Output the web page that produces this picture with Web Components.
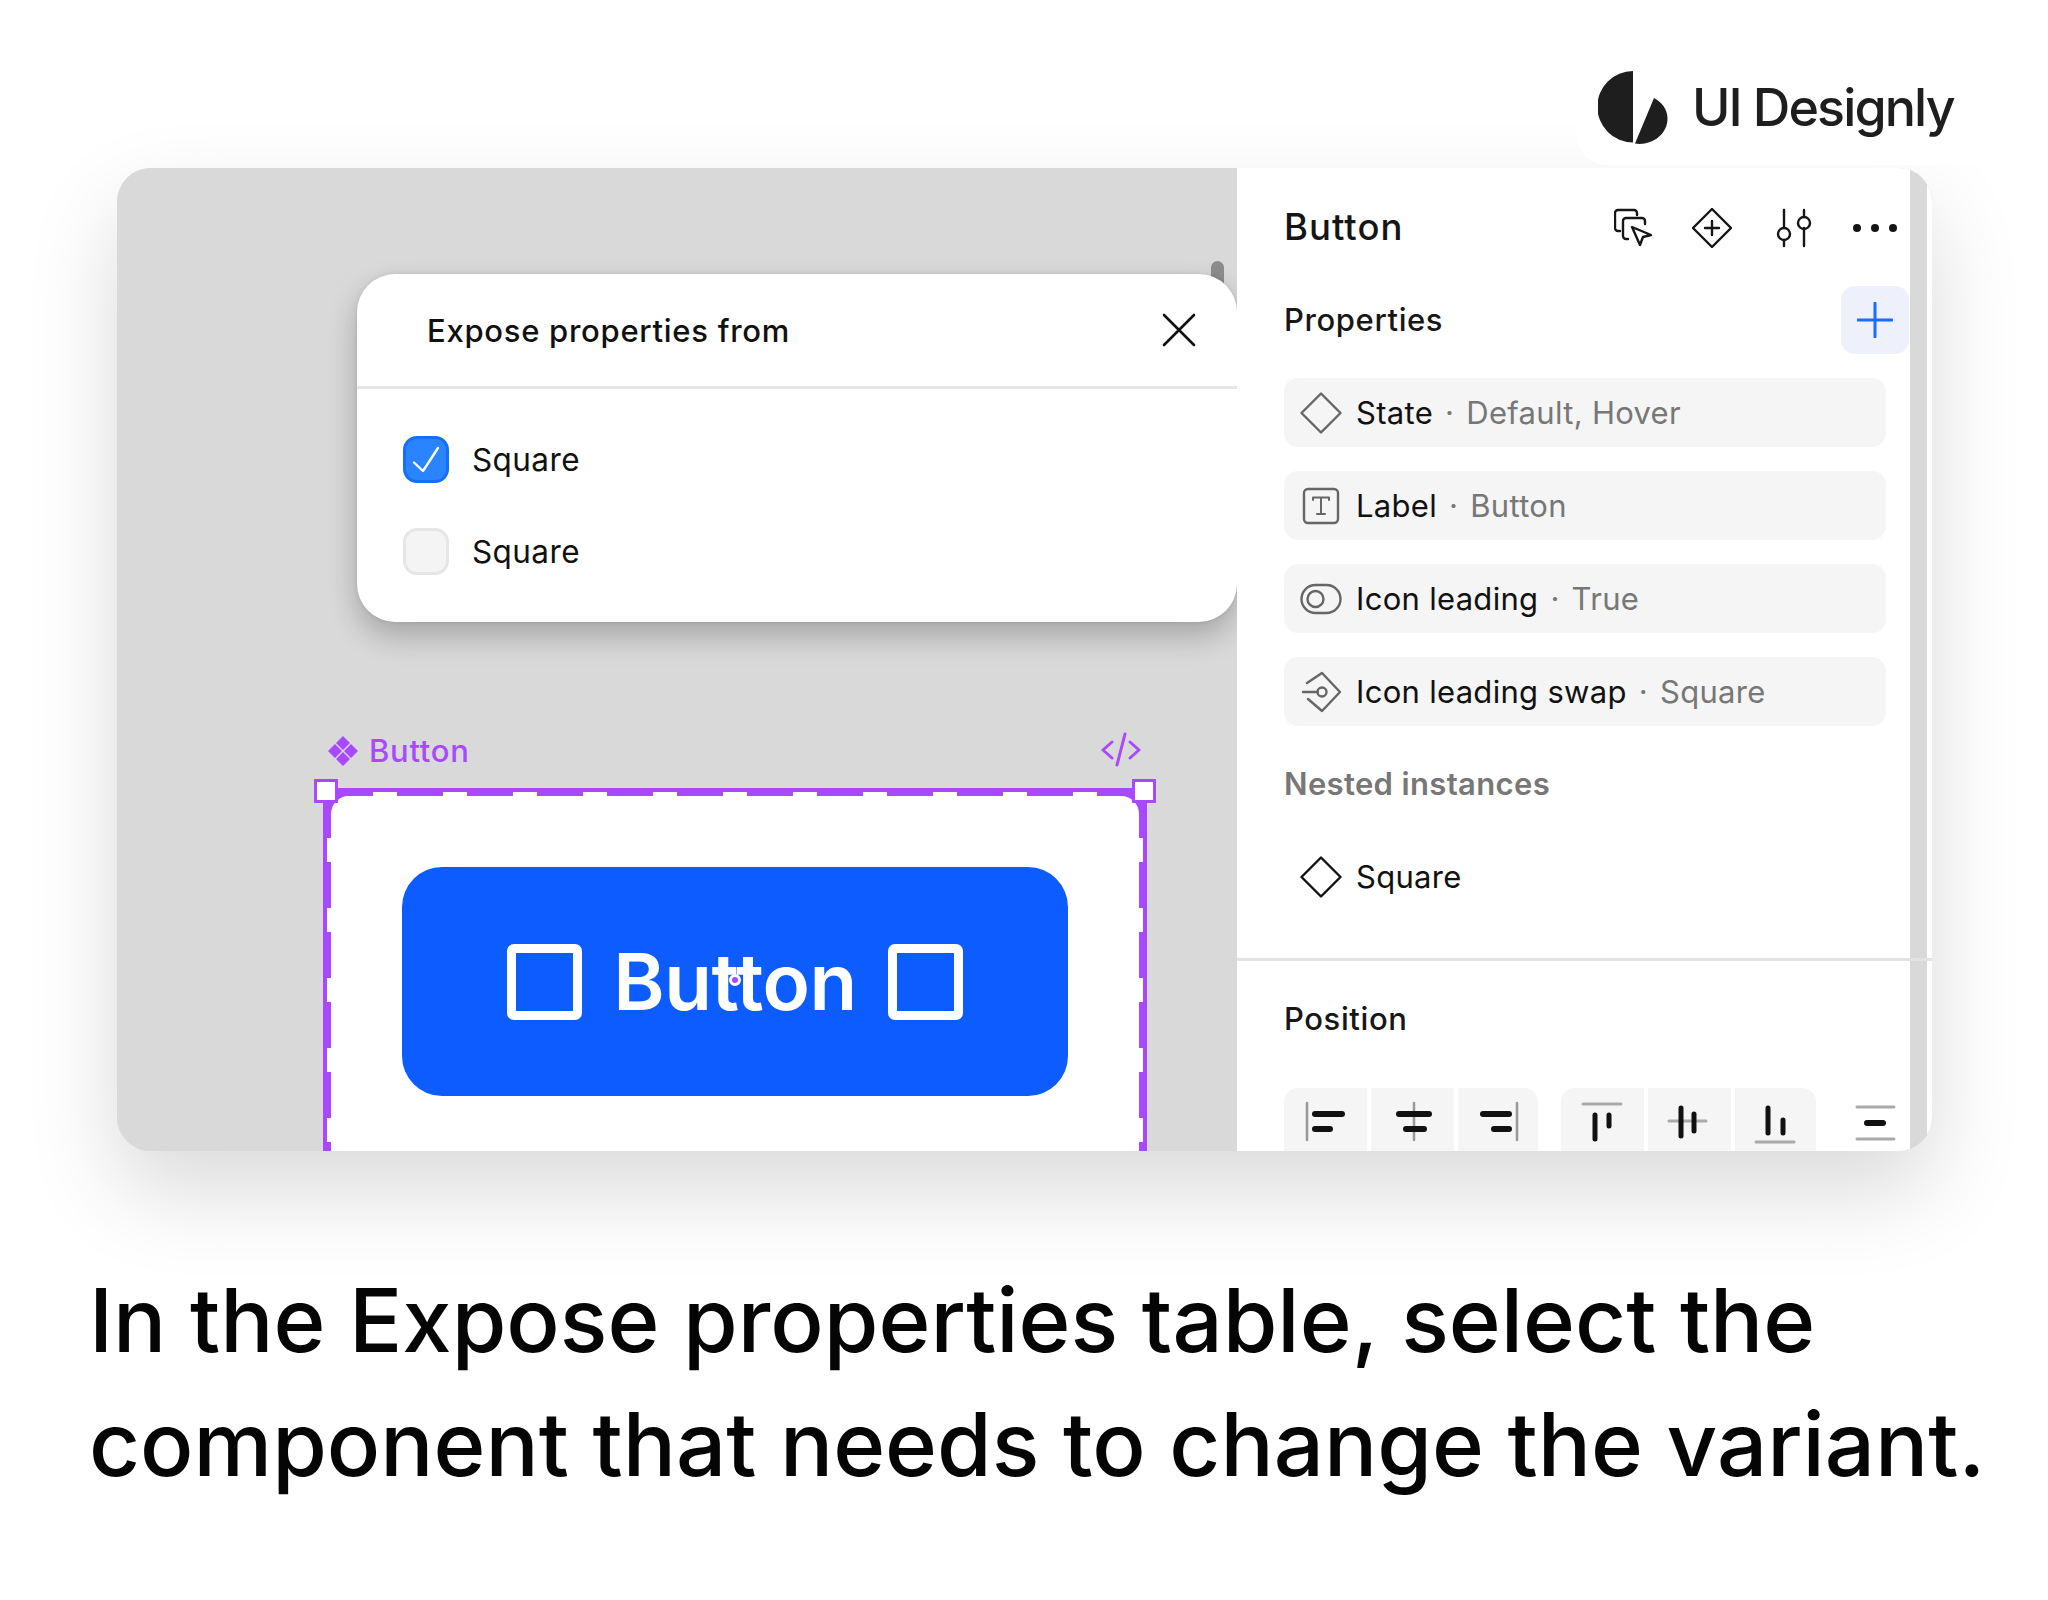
<!DOCTYPE html>
<html lang="en">
<head>
<meta charset="utf-8">
<title>Expose properties</title>
<style>
  html, body { margin: 0; padding: 0; background: #fff; }
  body { font-family: Inter, "Liberation Sans", sans-serif; color: #0a0a0a; width: 2048px; height: 1600px; overflow: hidden; }
</style>
</head>
<body>
<tutorial-slide>
  <brand-tab slot="brand">UI Designly</brand-tab>
  <design-card slot="card"></design-card>
  <span slot="caption">In the Expose properties table, select the<br>component that needs to change the variant.</span>
</tutorial-slide>

<script>
const rowIcons = {
    diamond: `<svg width="42" height="42" viewBox="0 0 42 42" fill="none" stroke="currentColor" stroke-width="2.4" stroke-linejoin="round"><path d="M21 1.5 40.5 21 21 40.5 1.5 21Z"/></svg>`,
    text: `<svg width="42" height="42" viewBox="0 0 42 42" fill="none" stroke="currentColor" stroke-linecap="round" stroke-linejoin="round"><rect x="4" y="4" width="34" height="34" rx="4" stroke-width="2.4"/><path d="M13 15v-2.5h16V15M21 12.5V29M17 29h8" stroke-width="2"/></svg>`,
    toggle: `<svg width="42" height="42" viewBox="0 0 42 42" fill="none" stroke="currentColor" stroke-width="2.4"><rect x="1.5" y="7" width="39" height="28" rx="14"/><circle cx="15.5" cy="21" r="8"/></svg>`,
    swap: `<svg width="42" height="42" viewBox="0 0 42 42" fill="none" stroke="currentColor" stroke-width="2.4" stroke-linecap="round" stroke-linejoin="round"><path d="M7 12 22 2l18 19-18 19-14-12"/><circle cx="22" cy="21" r="4.5"/><path d="M3 21h14.500"/></svg>`
};

class TutorialSlide extends HTMLElement {
    constructor() {
        super();
        this.attachShadow({ mode: "open" });
        this.shadowRoot.innerHTML = `
            <style>
                :host { display: flex; flex-direction: column; width: 2048px; height: 1600px; }
                .brand { display: flex; justify-content: flex-end; height: 165px; position: relative; z-index: 2; }
                .card { display: block; margin: 3px 0 0 117px; }
                .caption {
                    margin: 107px 0 0 89px;
                    font-size: 88.5px; line-height: 123.5px; font-weight: 500; color: #050505;
                    white-space: nowrap;
                }
            </style>
            <div class="brand"><slot name="brand"></slot></div>
            <div class="card"><slot name="card"></slot></div>
            <div class="caption"><slot name="caption"></slot></div>
        `;
    }
}

class BrandTab extends HTMLElement {
    constructor() {
        super();
        this.attachShadow({ mode: "open" });
        this.shadowRoot.innerHTML = `
            <style>
                :host {
                    display: flex; align-items: flex-start; gap: 24px; box-sizing: border-box;
                    width: 471px; height: 165px; padding: 70px 0 0 21px;
                    background: #fff; border-bottom-left-radius: 30px;
                    font-size: 52px; line-height: 56px; font-weight: 500; color: #1e1e1e; letter-spacing: -1.9px;
                }
                svg { flex: none; }
                span { margin-top: 10px; }
            </style>
            <svg width="70" height="74" viewBox="0 0 70 74" fill="#1e1e1e">
                <path d="M35 1A35 35 0 0 0 35 72.4Z"/>
                <path d="M56 28 37 73.6C53 76 69.5 65 69.5 48.5 69.5 40 64 32 56 28Z"/>
            </svg>
            <span><slot></slot></span>
        `;
    }
}

class DesignCard extends HTMLElement {
    constructor() {
        super();
        this.attachShadow({ mode: "open" });
        this.shadowRoot.innerHTML = `
            <style>
                :host {
                    display: grid; grid-template-columns: 1120px 695px; width: 1815px; height: 983px;
                    border-radius: 34px; overflow: hidden; background: #d9d9d9;
                    box-shadow: 0 40px 90px rgba(0,0,0,.15);
                }
            </style>
            <canvas-area></canvas-area>
            <inspector-panel></inspector-panel>
        `;
    }
}

class CanvasArea extends HTMLElement {
    constructor() {
        super();
        this.attachShadow({ mode: "open" });
        this.shadowRoot.innerHTML = `
            <style>
                :host { display: block; position: relative; background: #d9d9d9; height: 983px; overflow: hidden; }
                .nub { position: absolute; left: 1094px; top: 93px; width: 13px; height: 40px; border-radius: 7px; background: #8c8c8c; }
                .label {
                    position: absolute; left: 210px; top: 562px; display: flex; align-items: center; gap: 10px;
                    color: #a849ff; font-size: 31px; line-height: 42px; font-weight: 500; letter-spacing: .7px;
                }
                .code { position: absolute; left: 984px; top: 564px; }
                expose-dialog { position: absolute; left: 240px; top: 106px; }
                selection-frame { position: absolute; left: 206px; top: 620px; }
            </style>
            <div class="nub"></div>
            <div class="label">
                <svg width="32" height="32" viewBox="0 0 32 32" fill="#a849ff"><path d="M16 1l7 7-7 7-7-7zM8 9l7 7-7 7-7-7zM24 9l7 7-7 7-7-7zM16 17l7 7-7 7-7-7z"/></svg>
                <span>Button</span>
            </div>
            <svg class="code" width="40" height="36" viewBox="0 0 40 36" fill="none" stroke="#a849ff" stroke-width="3" stroke-linecap="round" stroke-linejoin="round"><path d="M11 10 2 18l9 8M29 10l9 8-9 8M24 2 16 33"/></svg>
            <selection-frame><demo-button>Button</demo-button></selection-frame>
            <expose-dialog heading="Expose properties from">
                <check-row checked>Square</check-row>
                <check-row>Square</check-row>
            </expose-dialog>
        `;
    }
}

class ExposeDialog extends HTMLElement {
    constructor() {
        super();
        this.attachShadow({ mode: "open" });
        this.shadowRoot.innerHTML = `
            <style>
                :host {
                    display: block; width: 880px; height: 348px; background: #fff; border-radius: 38px;
                    box-shadow: 0 14px 30px rgba(0,0,0,.24), 0 0 4px rgba(0,0,0,.1);
                }
                header {
                    display: flex; align-items: center; justify-content: space-between; box-sizing: border-box;
                    height: 115px; padding: 0 41px 0 70px; border-bottom: 3px solid #e6e6e6;
                    font-size: 31px; font-weight: 500; color: #111; letter-spacing: .72px;
                }
                .body { display: flex; flex-direction: column; gap: 45px; padding: 47px 0 0 46px; }
            </style>
            <header>
                <span>${this.getAttribute('heading') ?? ''}</span>
                <svg width="34" height="34" viewBox="0 0 34 34" stroke="#111" stroke-width="2.6" stroke-linecap="round"><path d="M2 2 32 32M32 2 2 32"/></svg>
            </header>
            <div class="body"><slot></slot></div>
        `;
    }
}

class CheckRow extends HTMLElement {
    constructor() {
        super();
        this.attachShadow({ mode: "open" });
        const checked = this.hasAttribute('checked');
        this.shadowRoot.innerHTML = `
            <style>
                :host { display: flex; align-items: center; gap: 23px; height: 47px; font-size: 31.5px; letter-spacing: .4px; color: #111; }
                .box {
                    box-sizing: border-box; width: 46px; height: 47px; border-radius: 14px;
                    display: flex; align-items: center; justify-content: center;
                    background: ${checked ? '#2b84ff' : '#f4f4f4'};
                    border: 3px solid ${checked ? '#1470fb' : '#e6e6e6'};
                }
            </style>
            <div class="box">${checked ? `<svg width="30" height="30" viewBox="0 0 30 30" fill="none" stroke="#fff" stroke-width="2.3" stroke-linecap="round" stroke-linejoin="round"><path d="M3 17.500l9 8.500L27 3"/></svg>` : ''}</div>
            <span><slot></slot></span>
        `;
    }
}

class SelectionFrame extends HTMLElement {
    constructor() {
        super();
        this.attachShadow({ mode: "open" });
        this.shadowRoot.innerHTML = `
            <style>
                :host {
                    --dash-x: repeating-linear-gradient(90deg, #fff -20px 4px, transparent 4px 50px);
                    --dash-y: repeating-linear-gradient(180deg, #fff -20px 4px, transparent 4px 50px);
                    display: block; position: relative; box-sizing: border-box; width: 824px; height: 380px;
                    padding: 8px 8px 0;
                    background:
                        var(--dash-x) left 4px / 100% 4px no-repeat,
                        var(--dash-y) 4px 0 / 4px 100% no-repeat,
                        var(--dash-y) calc(100% - 4px) 0 / 4px 100% no-repeat,
                        #a849ff;
                }
                .inner { background: #fff; height: 100%; border-radius: 18px 18px 0 0; padding: 71px 0 0 71px; box-sizing: border-box; }
                .handle { position: absolute; top: -9px; box-sizing: border-box; width: 24px; height: 24px; background: #fff; border: 3px solid #a849ff; }
                .a { left: -9px; } .b { right: -9px; }
            </style>
            <div class="inner"><slot></slot></div>
            <div class="handle a"></div>
            <div class="handle b"></div>
        `;
    }
}

class DemoButton extends HTMLElement {
    constructor() {
        super();
        this.attachShadow({ mode: "open" });
        this.shadowRoot.innerHTML = `
            <style>
                :host {
                    display: flex; align-items: center; justify-content: center; gap: 31px; position: relative;
                    width: 666px; height: 229px; border-radius: 40px; background: #0d5cff; color: #fff;
                    font-size: 78px; font-weight: 600; letter-spacing: -.5px;
                }
                i { display: block; box-sizing: border-box; width: 75px; height: 76px; border: 9px solid #fff; border-radius: 7px; }
                b { position: absolute; left: 327px; top: 107px; width: 12px; height: 12px; box-sizing: border-box; border-radius: 50%; background: #a849ff; border: 3px solid #fff; }
            </style>
            <i></i><span><slot></slot></span><i></i><b></b>
        `;
    }
}

class PropRow extends HTMLElement {
    constructor() {
        super();
        this.attachShadow({ mode: "open" });
        const plain = this.hasAttribute('plain');
        const value = this.getAttribute('value');
        const tone = this.getAttribute('tone') ?? '#666';
        this.shadowRoot.innerHTML = `
            <style>
                :host {
                    display: flex; align-items: center; box-sizing: border-box; width: 602px; height: 69px;
                    padding-left: 16px; border-radius: 14px; font-size: 31px; letter-spacing: .3px; color: #111;
                    background: ${plain ? 'transparent' : '#f5f5f5'};
                }
                .icon { display: flex; color: ${tone}; margin-right: 14px; }
                .dot { color: #777; margin: 0 12px; }
                .value { color: #777; }
            </style>
            <span class="icon">${rowIcons[this.getAttribute('icon')]}</span>
            <span><slot></slot></span>
            ${value ? `<span class="dot">·</span><span class="value">${value}</span>` : ''}
        `;
    }
}

class AlignGroup extends HTMLElement {
    constructor() {
        super();
        this.attachShadow({ mode: "open" });
        this.shadowRoot.innerHTML = `
            <style>
                :host { display: flex; gap: 4px; height: 80px; border-radius: 14px; overflow: hidden; }
                ::slotted(*) { display: block; background: #f5f5f5; }
            </style>
            <slot></slot>
        `;
    }
}

class InspectorPanel extends HTMLElement {
    constructor() {
        super();
        this.attachShadow({ mode: "open" });
        this.shadowRoot.innerHTML = `
            <style>
                :host {
                    display: block; box-sizing: border-box; height: 983px; padding-left: 47px; overflow: hidden;
                    background: linear-gradient(90deg, #fff 0 673px, #d9d9d9 673px 690px, #fff 690px);
                }
                .top { display: flex; align-items: center; justify-content: space-between; width: 631px; height: 118px; font-size: 36.5px; font-weight: 500; letter-spacing: 1px; color: #151515; }
                .tools { display: flex; letter-spacing: 0; margin-top: 2px; }
                .tools span { display: flex; width: 80px; height: 60px; align-items: center; justify-content: center; }
                .tools span:nth-child(1) { margin: 0 -2px 0 2px; }
                .tools span:nth-child(2) { margin-right: 2px; }
                .tools span:nth-child(3) { margin-right: 1px; }
                .props { display: flex; align-items: center; justify-content: space-between; width: 625px; height: 68px; }
                h3 { margin: 0; font-size: 31px; line-height: 40px; font-weight: 500; letter-spacing: .6px; color: #171717; }
                h3.muted { color: #777; margin-top: 38px; font-weight: 600; letter-spacing: .35px; }
                .plus { display: flex; align-items: center; justify-content: center; width: 68px; height: 68px; border-radius: 14px; background: #eef0fc; }
                .rows { display: flex; flex-direction: column; gap: 24px; margin-top: 24px; }
                .nested { margin-top: 38px; }
                hr { margin: 47px 0 0 -47px; border: 0; height: 3px; background: #e2e2e2; width: 695px; }
                .position { margin-top: 38px; }
                .aligns { display: flex; margin-top: 49px; }
                .aligns align-group + align-group { margin-left: 23px; }
                .solo { margin-left: 38px; margin-top: 0; }
            </style>
            <div class="top">
                <span>Button</span>
                <div class="tools">
                    <span><svg width="40" height="40" viewBox="0 0 40 40" fill="none" stroke="#151515" stroke-width="2.4" stroke-linecap="round" stroke-linejoin="round"><path d="M6 23H4a3 3 0 0 1-3-3V5a3 3 0 0 1 3-3h16a3 3 0 0 1 3 3v2"/><path d="M14 31h-2a3 3 0 0 1-3-3V13a3 3 0 0 1 3-3h16a3 3 0 0 1 3 3v3"/><path d="M18 19 37 27l-8 2-3 8Z"/></svg></span>
                    <span><svg width="40" height="40" viewBox="0 0 40 40" fill="none" stroke="#151515" stroke-width="2.4" stroke-linecap="round" stroke-linejoin="round"><path d="M20 1 39 20 20 39 1 20Z"/><path d="M20 13v14M13 20h14"/></svg></span>
                    <span><svg width="40" height="40" viewBox="0 0 40 40" fill="none" stroke="#151515" stroke-width="2.4" stroke-linecap="round"><path d="M10 2v18M10 32v6M30 2v7M30 20v18"/><circle cx="10" cy="26" r="6"/><circle cx="30" cy="15" r="6"/></svg></span>
                    <span><svg width="50" height="12" viewBox="0 0 50 12" fill="#151515"><circle cx="7" cy="6" r="4"/><circle cx="25" cy="6" r="4"/><circle cx="43" cy="6" r="4"/></svg></span>
                </div>
            </div>
            <div class="props">
                <h3>Properties</h3>
                <div class="plus"><svg width="36" height="36" viewBox="0 0 36 36" stroke="#1a6bff" stroke-width="3" stroke-linecap="round"><path d="M18 1v34M1 18h34"/></svg></div>
            </div>
            <div class="rows">
                <prop-row icon="diamond" value="Default, Hover">State</prop-row>
                <prop-row icon="text" value="Button">Label</prop-row>
                <prop-row icon="toggle" value="True">Icon leading</prop-row>
                <prop-row icon="swap" value="Square">Icon leading swap</prop-row>
            </div>
            <h3 class="muted">Nested instances</h3>
            <prop-row class="nested" plain icon="diamond" tone="#111">Square</prop-row>
            <hr>
            <h3 class="position">Position</h3>
            <div class="aligns">
                <align-group>
                    <svg width="83" height="80" fill="none" stroke-linecap="round"><path d="M23 15v37" stroke="#999" stroke-width="2.5"/><path d="M31 26h27M31 41h15" stroke="#111" stroke-width="6"/></svg>
                    <svg width="83" height="80" fill="none" stroke-linecap="round"><path d="M43 15v37" stroke="#999" stroke-width="2.5"/><path d="M28 26h30M35 41h18" stroke="#111" stroke-width="6"/></svg>
                    <svg width="80" height="80" fill="none" stroke-linecap="round"><path d="M59 15v37" stroke="#999" stroke-width="2.5"/><path d="M25 26h26M36 41h15" stroke="#111" stroke-width="6"/></svg>
                </align-group>
                <align-group>
                    <svg width="83" height="80" fill="none" stroke-linecap="round"><path d="M22 16h38" stroke="#aaa" stroke-width="3"/><path d="M34 27v24M48 27v11" stroke="#111" stroke-width="5"/></svg>
                    <svg width="83" height="80" fill="none" stroke-linecap="round"><path d="M21 33h37" stroke="#aaa" stroke-width="3"/><path d="M33 20v28M46 26v17" stroke="#111" stroke-width="5"/></svg>
                    <svg width="81" height="80" fill="none" stroke-linecap="round"><path d="M21 54h38" stroke="#aaa" stroke-width="3"/><path d="M33 20v25M48 32v13" stroke="#111" stroke-width="5"/></svg>
                </align-group>
                <svg class="solo" width="44" height="80" fill="none" stroke-linecap="round"><path d="M3 19h37M3 51h37" stroke="#aaa" stroke-width="3"/><path d="M13 35h16" stroke="#111" stroke-width="6"/></svg>
            </div>
        `;
    }
}

customElements.define('tutorial-slide', TutorialSlide);
customElements.define('brand-tab', BrandTab);
customElements.define('design-card', DesignCard);
customElements.define('canvas-area', CanvasArea);
customElements.define('expose-dialog', ExposeDialog);
customElements.define('check-row', CheckRow);
customElements.define('selection-frame', SelectionFrame);
customElements.define('demo-button', DemoButton);
customElements.define('prop-row', PropRow);
customElements.define('align-group', AlignGroup);
customElements.define('inspector-panel', InspectorPanel);
</script>
</body>
</html>
